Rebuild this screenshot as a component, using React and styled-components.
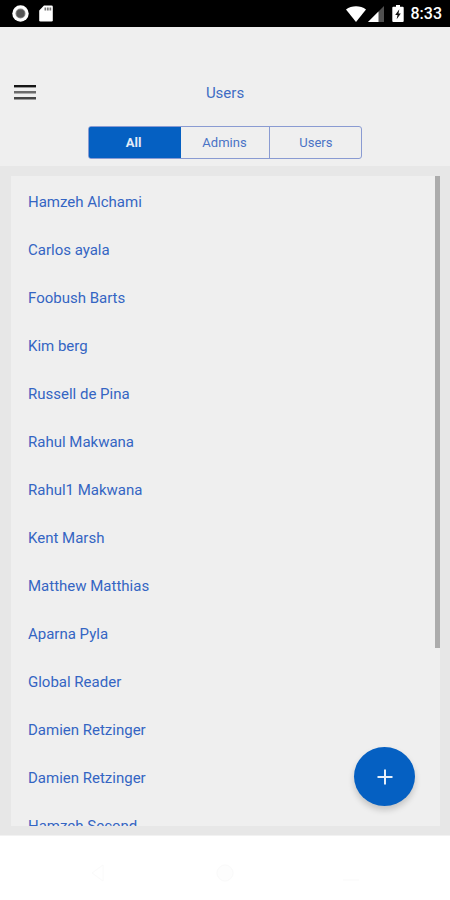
import React, {useState} from 'react';
import styled, {createGlobalStyle} from 'styled-components';

const GlobalStyle = createGlobalStyle`
  * {
    box-sizing: border-box;
  }

  body {
    margin: 0;
    font-family: Roboto, sans-serif;
    background: #fff;
  }

  button {
    font-family: inherit;
    cursor: pointer;
  }
`

const Screen = styled.div`
  display: flex;
  flex-direction: column;
  height: 100vh;
`

const StatusBar = styled.div`
  display: flex;
  align-items: center;
  justify-content: space-between;
  flex: none;
  height: 27px;
  padding: 0 8px 0 12px;
  background: #000;
  color: #fff;
  font-size: 16px;
  font-weight: 500;

  svg {
    display: block;
  }
`

const StatusGroup = styled.div`
  display: flex;
  align-items: center;
  gap: ${({$gap}) => $gap}px;
`

const Clock = styled.span`
  line-height: 20px;
`

const Header = styled.header`
  flex: none;
  padding: 48px 0 7px;
  background: #efefef;
`

const TitleRow = styled.div`
  display: grid;
  grid-template-columns: 48px 1fr 48px;
  align-items: center;
  height: 36px;
  margin-bottom: 15px;
`

const MenuButton = styled.button`
  display: flex;
  align-items: center;
  height: 36px;
  padding: 0 0 2px 14px;
  border: 0;
  background: none;
`

const Title = styled.h1`
  margin: 0;
  color: #3e6cc4;
  font-size: 15px;
  font-weight: 400;
  text-align: center;
`

const Tabs = styled.div`
  display: grid;
  grid-template-columns: repeat(3, 1fr);
  width: 61%;
  height: 33px;
  margin: 0 auto;
  border: 1px solid #8a9bd2;
  border-radius: 3px;
  overflow: hidden;
`

const Tab = styled.button`
  padding: 0;
  border: 0;
  border-right: ${({$last}) => ($last ? '0' : '1px solid #8a9bd2')};
  background: ${({$active}) => ($active ? '#0560c2' : 'transparent')};
  box-shadow: ${({$active}) => ($active ? '0 0 0 1px #0560c2' : 'none')};
  border-color: ${({$active}) => ($active ? '#0560c2' : '#8a9bd2')};
  color: ${({$active}) => ($active ? '#e4ecf8' : '#4a73c6')};
  font-size: 13px;
  font-weight: ${({$active}) => ($active ? 700 : 400)};
`

const Body = styled.main`
  display: flex;
  flex: 1;
  min-height: 0;
  padding: 10px 10px 9px 11px;
  background: #e7e7e7;
  border-bottom: 1px solid #f2f2f2;
`

const Panel = styled.section`
  position: relative;
  flex: 1;
  overflow: hidden;
  background: #efefef;
`

const List = styled.ul`
  margin: 0;
  padding: 2px 0 0;
  list-style: none;
`

const Row = styled.li`
  display: flex;
  align-items: center;
  height: 48px;
  padding: 0 17px;
  color: #3465c3;
  font-size: 15px;
`

const ScrollThumb = styled.div`
  position: absolute;
  top: 0;
  right: 0;
  width: 5px;
  height: 72.6%;
  background: #acacac;
`

const AddButton = styled.button`
  position: absolute;
  right: 25px;
  bottom: 20px;
  display: flex;
  align-items: center;
  justify-content: center;
  width: 61px;
  height: 59px;
  padding: 0;
  border: 0;
  border-radius: 50%;
  background: #0560c2;
  box-shadow: 0 4px 6px rgba(0, 0, 0, 0.18);
`

const NavBar = styled.nav`
  display: flex;
  align-items: center;
  justify-content: space-around;
  flex: none;
  height: 64px;
  padding: 10px 36px 0;
  background: #fff;
`

const NavButton = styled.button`
  display: flex;
  padding: 0;
  border: 0;
  background: none;
`

function RecordIcon() {
	return (<svg width="17" height="17" viewBox="0 0 17 17">
		<circle cx="8.5" cy="8.5" r="8.2" fill="#fff"/>
		<circle cx="8.5" cy="8.5" r="5" fill="#888"/>
		<circle cx="8.5" cy="8.5" r="4" fill="#555"/>
	</svg>);
}

function SdCardIcon() {
	return (<svg width="14" height="17" viewBox="0 0 14 17">
		<path d="M5 .5h7.500a1.300 1.300 0 0 1 1.300 1.300v13.400a1.300 1.300 0 0 1-1.300 1.300h-11a1.300 1.300 0 0 1-1.300-1.300V5.500z" fill="#fff"/>
		<path d="M5.500 2.500h1.700v3H5.500zM8 2.500h1.700v3H8zM10.500 2.500h1.700v3h-1.700z" fill="#777"/>
	</svg>);
}

function WifiIcon() {
	return (<svg width="20" height="16" viewBox="0 0 20 16">
		<path d="M0 3.600C5.500-.8 14.500-.8 20 3.600L10 16z" fill="#fff"/>
	</svg>);
}

function SignalIcon() {
	return (<svg width="16" height="16" viewBox="0 0 16 16">
		<path d="M16 0v16H0z" fill="#505050"/>
		<path d="M10.500 5.500V16H0z" fill="#fff"/>
	</svg>);
}

function BatteryIcon() {
	return (<svg width="12" height="17" viewBox="0 0 12 17">
		<path d="M4 0h4v1.700h2.700a1 1 0 0 1 1 1V16a1 1 0 0 1-1 1H1.300a1 1 0 0 1-1-1V2.700a1 1 0 0 1 1-1H4z" fill="#fff"/>
		<path d="M7.300 4.300 3.200 10h2.300l-.8 4.300L8.800 8.500H6.500z" fill="#111"/>
	</svg>);
}

function MenuIcon() {
	return (<svg width="22" height="16" viewBox="0 0 22 16">
		<path d="M0 1h22v2.400H0z" fill="#161616"/>
		<path d="M0 7h22v2.500H0z" fill="#6b6b6b"/>
		<path d="M0 13h22v2.500H0z" fill="#454545"/>
	</svg>);
}

function App() {
	const [active, setActive] = useState('All');

	return (<>
		<GlobalStyle/>
		<Screen>
			<StatusBar>
				<StatusGroup $gap={10}>
					<RecordIcon/>
					<SdCardIcon/>
				</StatusGroup>
				<StatusGroup $gap={8}>
					<StatusGroup $gap={2}>
						<WifiIcon/>
						<SignalIcon/>
					</StatusGroup>
					<StatusGroup $gap={7}>
						<BatteryIcon/>
						<Clock>8:33</Clock>
					</StatusGroup>
				</StatusGroup>
			</StatusBar>
			<Header>
				<TitleRow>
					<MenuButton aria-label="Menu"><MenuIcon/></MenuButton>
					<Title>Users</Title>
				</TitleRow>
				<Tabs>
					{tabs.map((tab, i) => (
						<Tab
							key={tab}
							aria-pressed={active === tab}
							$last={i === tabs.length - 1}
							$active={active === tab}
							onClick={() => setActive(tab)}
						>
							{tab}
						</Tab>
					))}
				</Tabs>
			</Header>
			<Body>
				<Panel>
					<List>
						{users.map((user, i) => <Row key={i}>{user}</Row>)}
					</List>
					<ScrollThumb/>
					<AddButton aria-label="Add user">
						<svg width="16" height="16" viewBox="0 0 16 16">
							<path d="M8 .5v15M.5 8h15" stroke="#e6effa" strokeWidth="2"/>
						</svg>
					</AddButton>
				</Panel>
			</Body>
			<NavBar>
				<NavButton aria-label="Back">
					<svg width="18" height="18" viewBox="0 0 18 18">
						<path d="M13 1v16L2 9z" fill="none" stroke="#fafafa"/>
					</svg>
				</NavButton>
				<NavButton aria-label="Home">
					<svg width="18" height="18" viewBox="0 0 18 18">
						<circle cx="9" cy="9" r="8" fill="#fdfdfd" stroke="#fafafa"/>
					</svg>
				</NavButton>
				<NavButton aria-label="Recent apps">
					<svg width="18" height="18" viewBox="0 0 18 18">
						<path d="M1 16h16" stroke="#fcfcfc" strokeWidth="2"/>
					</svg>
				</NavButton>
			</NavBar>
		</Screen>
	</>);
}

export default App;

const tabs = ['All', 'Admins', 'Users'];

const users = [
	'Hamzeh Alchami',
	'Carlos ayala',
	'Foobush Barts',
	'Kim berg',
	'Russell de Pina',
	'Rahul Makwana',
	'Rahul1 Makwana',
	'Kent Marsh',
	'Matthew Matthias',
	'Aparna Pyla',
	'Global Reader',
	'Damien Retzinger',
	'Damien Retzinger',
	'Hamzeh Second',
];
